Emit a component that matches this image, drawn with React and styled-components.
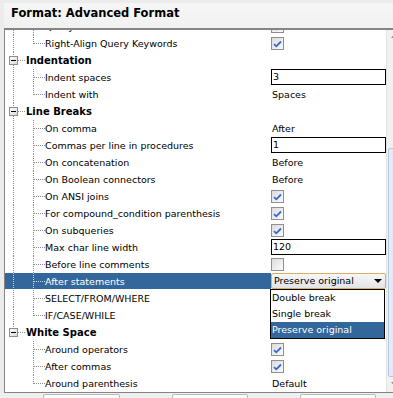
import React from 'react';
import styled, { createGlobalStyle } from 'styled-components';

const Global = createGlobalStyle`
  html, body { margin: 0; padding: 0; background: #ececec; overflow: hidden; }
  body { font-family: "DejaVu Sans", Verdana, sans-serif; color: #000; }
`;

const Window = styled.div`
  width: 403px;
  height: 398px;
  display: flex;
  flex-direction: column;
  background: #ececec;
  overflow: hidden;
`;

const TitleBar = styled.div`
  flex: none;
  margin: 3px 0 0 4px;
  height: 25px;
  box-sizing: border-box;
  padding: 3px 0 0 7px;
  background: linear-gradient(#f6f6f6, #f1f1f1);
  font: bold 11.5px/14px "DejaVu Sans", Verdana, sans-serif;
  white-space: nowrap;
`;

const Panel = styled.div`
  flex: none;
  margin-left: 4px;
  height: 365px;
  box-sizing: border-box;
  border-top: 2px solid #858585;
  border-left: 1px solid #858585;
  border-bottom: 1px solid #858585;
  display: flex;
  background: #fff;
`;

const List = styled.div`
  width: 381px;
  flex: none;
  overflow: hidden;
`;

const Scrolled = styled.div`
  margin-top: -12px;
`;

const Row = styled.div`
  display: grid;
  grid-template-columns: 266px 115px;
  height: 17px;
`;

const Name = styled.div`
  display: flex;
  align-items: center;
  height: ${p => (p.$selected ? '16px' : '17px')};
  background: ${p => (p.$selected ? '#33669a' : 'transparent')};
  color: ${p => (p.$selected ? '#fff' : '#000')};
  overflow: hidden;
`;

const Label = styled.span`
  font-size: ${p => (p.$group ? '10px' : '9.5px')};
  font-weight: ${p => (p.$group ? 'bold' : 'normal')};
  line-height: 17px;
  white-space: nowrap;
`;

const Value = styled.div`
  position: relative;
  display: flex;
  align-items: center;
  font-size: 9.5px;
  line-height: 17px;
  padding-left: 1px;
  white-space: nowrap;
`;

const TextValue = styled.span``;

const Box = styled.span`
  display: flex;
  align-items: center;
  justify-content: center;
  width: 13px;
  height: 13px;
  box-sizing: border-box;
  margin-left: -1px;
  border: 1px solid #8f8f8f;
  background: linear-gradient(135deg, #dcdcdc, #fbfbfb);
`;

const Input = styled.div`
  align-self: flex-start;
  width: 115px;
  height: 16px;
  margin-left: -1px;
  box-sizing: border-box;
  border: 1px solid #000;
  background: #fff;
  font-size: 9.5px;
  line-height: 14px;
  padding-left: 1px;
`;

const Combo = styled.div`
  align-self: flex-start;
  width: 115px;
  height: 16px;
  margin-left: -1px;
  box-sizing: border-box;
  border: 1px solid #d9ae62;
  border-radius: 2px;
  background: linear-gradient(#f7f7f7, #e4e4e4);
  display: flex;
  align-items: center;
  justify-content: space-between;
  padding: 0 3px 0 2px;
  font-size: 9.5px;
  line-height: 14px;
`;

const DropList = styled.div`
  position: absolute;
  top: 16px;
  left: -1px;
  width: 115px;
  box-sizing: border-box;
  border: 1px solid #000;
  background: #fff;
  z-index: 5;
`;

const DropItem = styled.div`
  height: 16px;
  line-height: 16px;
  font-size: 9.5px;
  padding-left: 1px;
  background: ${p => (p.$active ? '#33669a' : '#fff')};
  color: ${p => (p.$active ? '#fff' : '#000')};
`;

const ScrollBar = styled.div`
  width: 17px;
  flex: none;
  box-sizing: border-box;
  border-left: 1px solid #e3e3e3;
  background: #f1f1f1;
  display: flex;
  flex-direction: column;
`;

const ScrollButton = styled.div`
  flex: none;
  height: ${p => p.$h}px;
  display: flex;
  align-items: center;
  justify-content: center;
`;

const Track = styled.div`
  flex: 1;
  min-height: 0;
  padding-top: 107px;
  box-sizing: border-box;
`;

const Thumb = styled.div`
  margin-left: 1px;
  width: 13px;
  height: 229px;
  box-sizing: border-box;
  border: 1px solid #b4c6df;
  border-radius: 2px;
  background: linear-gradient(90deg, #e6eef9, #cfdcee);
`;

const Footer = styled.div`
  flex: 1;
  min-height: 0;
  overflow: hidden;
  display: flex;
  align-items: flex-start;
  padding: 1px 0 0 43px;
  gap: 52px;
  background: #efefef;
`;

const FooterButton = styled.div`
  flex: none;
  width: ${p => p.$w}px;
  height: 22px;
  box-sizing: border-box;
  border: 1px solid #b9b9b9;
  border-radius: 2px;
  background: linear-gradient(#fdfdfd, #ededed);
`;

const DOT = '1 1';

function ChildLines({ root, last, selected }) {
  const c = selected ? '#c9d6e6' : '#8c8c8c';
  return (
    <svg width="40" height="17" style={{ flex: 'none', display: 'block' }} shapeRendering="crispEdges">
      {root && <line x1="8.5" y1="0" x2="8.5" y2="17" stroke={c} strokeDasharray={DOT} />}
      <line x1="28.5" y1="0" x2="28.5" y2={last ? 9 : 17} stroke={c} strokeDasharray={DOT} />
      <line x1="29" y1="8.5" x2="40" y2="8.5" stroke={c} strokeDasharray={DOT} />
    </svg>
  );
}

function GroupLines({ last }) {
  const c = '#8c8c8c';
  return (
    <svg width="21" height="17" style={{ flex: 'none', display: 'block' }} shapeRendering="crispEdges">
      <line x1="8.5" y1="0" x2="8.5" y2="4" stroke={c} strokeDasharray={DOT} />
      {!last && <line x1="8.5" y1="13" x2="8.5" y2="17" stroke={c} strokeDasharray={DOT} />}
      <defs>
        <linearGradient id="gb" x1="0" y1="0" x2="1" y2="1">
          <stop offset="0" stopColor="#ffffff" />
          <stop offset="1" stopColor="#d8d8d8" />
        </linearGradient>
      </defs>
      <rect x="4.5" y="4.5" width="8" height="8" fill="url(#gb)" stroke="#8e8e8e" />
      <line x1="6" y1="8.5" x2="11" y2="8.5" stroke="#000" />
      <line x1="13" y1="8.5" x2="21" y2="8.5" stroke={c} strokeDasharray={DOT} />
    </svg>
  );
}

function Check({ checked }) {
  return (
    <Box>
      {checked && (
        <svg width="9" height="8" viewBox="0 0 9 8">
          <path d="M1 4.2 L3.3 6.3 L8 1.5" fill="none" stroke="#3768cf" strokeWidth="1.8" />
        </svg>
      )}
    </Box>
  );
}

function Arrow({ up, color = '#000', w = 7, h = 4 }) {
  return (
    <svg width={w} height={h} viewBox={`0 0 ${w} ${h}`} style={{ display: 'block' }}>
      <polygon
        points={up ? `0,${h} ${w},${h} ${w / 2},0` : `0,0 ${w},0 ${w / 2},${h}`}
        fill={color}
      />
    </svg>
  );
}

const rows = [
  { label: 'Query Case', root: true, value: { type: 'check', checked: true } },
  { label: 'Right-Align Query Keywords', root: true, last: true, value: { type: 'check', checked: true } },
  { group: 'Indentation' },
  { label: 'Indent spaces', root: true, value: { type: 'input', text: '3' } },
  { label: 'Indent with', root: true, last: true, value: { type: 'text', text: 'Spaces' } },
  { group: 'Line Breaks' },
  { label: 'On comma', root: true, value: { type: 'text', text: 'After' } },
  { label: 'Commas per line in procedures', root: true, value: { type: 'input', text: '1' } },
  { label: 'On concatenation', root: true, value: { type: 'text', text: 'Before' } },
  { label: 'On Boolean connectors', root: true, value: { type: 'text', text: 'Before' } },
  { label: 'On ANSI joins', root: true, value: { type: 'check', checked: true } },
  { label: 'For compound_condition parenthesis', root: true, value: { type: 'check', checked: true } },
  { label: 'On subqueries', root: true, value: { type: 'check', checked: true } },
  { label: 'Max char line width', root: true, value: { type: 'input', text: '120' } },
  { label: 'Before line comments', root: true, value: { type: 'check', checked: false } },
  {
    label: 'After statements',
    root: true,
    selected: true,
    value: {
      type: 'combo',
      text: 'Preserve original',
      options: ['Double break', 'Single break', 'Preserve original'],
    },
  },
  { label: 'SELECT/FROM/WHERE', root: true },
  { label: 'IF/CASE/WHILE', root: true, last: true },
  { group: 'White Space', last: true },
  { label: 'Around operators', value: { type: 'check', checked: true } },
  { label: 'After commas', value: { type: 'check', checked: true } },
  { label: 'Around parenthesis', last: true, value: { type: 'text', text: 'Default' } },
];

function ValueContent({ value }) {
  if (!value) return null;
  switch (value.type) {
    case 'check':
      return <Check checked={value.checked} />;
    case 'input':
      return <Input>{value.text}</Input>;
    case 'text':
      return <TextValue>{value.text}</TextValue>;
    case 'combo':
      return (
        <>
          <Combo>
            <span>{value.text}</span>
            <Arrow w={8} h={4} />
          </Combo>
          <DropList>
            {value.options.map(o => (
              <DropItem key={o} $active={o === value.text}>
                {o}
              </DropItem>
            ))}
          </DropList>
        </>
      );
    default:
      return null;
  }
}

export default function App() {
  return (
    <>
      <Global />
      <Window>
        <TitleBar>Format: Advanced Format</TitleBar>
        <Panel>
          <List>
            <Scrolled>
              {rows.map((r, i) =>
                r.group ? (
                  <Row key={i}>
                    <Name>
                      <GroupLines last={r.last} />
                      <Label $group>{r.group}</Label>
                    </Name>
                    <Value />
                  </Row>
                ) : (
                  <Row key={i}>
                    <Name $selected={r.selected}>
                      <ChildLines root={r.root} last={r.last} selected={r.selected} />
                      <Label>{r.label}</Label>
                    </Name>
                    <Value>
                      <ValueContent value={r.value} />
                    </Value>
                  </Row>
                )
              )}
            </Scrolled>
          </List>
          <ScrollBar>
            <ScrollButton $h={11}>
              <Arrow up w={9} h={5} color="#8a8a8a" />
            </ScrollButton>
            <Track>
              <Thumb />
            </Track>
            <ScrollButton $h={15}>
              <Arrow w={9} h={5} color="#8a8a8a" />
            </ScrollButton>
          </ScrollBar>
        </Panel>
        <Footer>
          <FooterButton $w={77} aria-label="OK" />
          <FooterButton $w={76} aria-label="Cancel" />
          <FooterButton $w={76} aria-label="Help" />
        </Footer>
      </Window>
    </>
  );
}
